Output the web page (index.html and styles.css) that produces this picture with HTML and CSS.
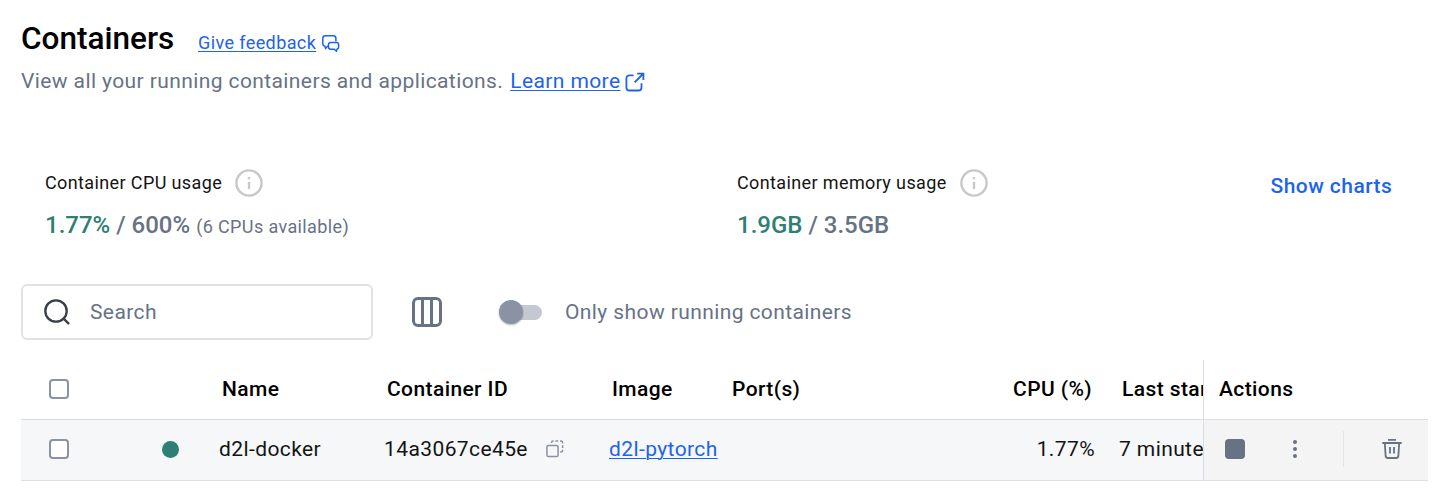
FILE: index.html
```html
<!DOCTYPE html>
<html lang="en">
<head>
<meta charset="utf-8">
<title>Containers</title>
<link rel="stylesheet" href="styles.css">
</head>
<body>
<main class="page">
  <header class="heading">
    <h1 class="title">Containers</h1>
    <a class="link feedback"><span class="link-text">Give feedback</span>
      <svg class="icon-feedback" width="18" height="18" viewBox="0 0 18 18" fill="none" stroke="currentColor" stroke-width="1.5" stroke-linejoin="round"><path d="M6.3 11.2H5.4L3.6 13.6L2.9 11.3C1.5 11 .8 10.2 .8 8.8V3.4C.8 1.7 1.8.8 3.4.8H11.3C13 .8 13.9 1.7 13.9 3.4V6.4"/><path d="M8.7 7.6H14.4C15.9 7.6 16.6 8.3 16.6 9.7V12C16.6 13.2 16.1 13.9 15.1 14.1L14.4 16.2L12.4 14.2H8.7C7.2 14.2 6.5 13.5 6.5 12V9.7C6.5 8.3 7.2 7.6 8.7 7.6Z"/></svg>
    </a>
  </header>
  <p class="subtitle"><span>View all your running containers and applications.</span>
    <a class="link learn"><span class="link-text">Learn more</span>
      <svg class="icon-external" width="20" height="20" viewBox="0 0 20 20" fill="none" stroke="currentColor" stroke-width="1.8"><path d="M8.5 3.3H4.6C2.6 3.3 1.4 4.4 1.4 6.4V15.4C1.4 17.4 2.6 18.5 4.6 18.5H13.4C15.4 18.5 16.5 17.4 16.5 15.4V11.3"/><path d="M9.6 10.4L18 2M12.2 1.7H18.4V8"/></svg>
    </a>
  </p>

  <section class="stats">
    <div class="stat stat-cpu">
      <div class="stat-label"><span>Container CPU usage</span>
        <svg class="icon-info" width="28" height="28" viewBox="0 0 28 28"><circle cx="14" cy="14" r="12.6" fill="none" stroke="#c8c8c8" stroke-width="2.4"/><path d="M14 13V20M14 8V10.2" stroke="#c8c8c8" stroke-width="2.4"/></svg>
      </div>
      <div class="stat-value"><span class="used">1.77%</span> / 600% <span class="note">(6 CPUs available)</span></div>
    </div>
    <div class="stat stat-memory">
      <div class="stat-label"><span>Container memory usage</span>
        <svg class="icon-info" width="28" height="28" viewBox="0 0 28 28"><circle cx="14" cy="14" r="12.6" fill="none" stroke="#c8c8c8" stroke-width="2.4"/><path d="M14 13V20M14 8V10.2" stroke="#c8c8c8" stroke-width="2.4"/></svg>
      </div>
      <div class="stat-value"><span class="used">1.9GB</span> / 3.5GB</div>
    </div>
    <a class="charts">Show charts</a>
  </section>

  <section class="toolbar">
    <div class="search">
      <svg width="28" height="28" viewBox="0 0 28 28" fill="none" stroke="#393f49" stroke-width="2.3" stroke-linecap="round"><circle cx="13" cy="13" r="10.7"/><path d="M20.6 20.6L25.4 25.4"/></svg>
      <span>Search</span>
    </div>
    <svg class="icon-columns" width="30" height="30" viewBox="0 0 30 30" fill="none" stroke="#677285" stroke-width="3"><rect x="1.5" y="1.5" width="27" height="27" rx="4.5"/><path d="M10.5 1.5V28.5M19.5 1.5V28.5"/></svg>
    <div class="toggle"><span class="knob"></span></div>
    <span class="toggle-label">Only show running containers</span>
  </section>

  <section class="table">
    <div class="row head">
      <div class="cell check"><span class="box"></span></div>
      <div class="cell"></div>
      <div class="cell">Name</div>
      <div class="cell">Container ID</div>
      <div class="cell">Image</div>
      <div class="cell">Port(s)</div>
      <div class="cell number">CPU (%)</div>
      <div class="cell last">Last started</div>
      <div class="cell actions">Actions</div>
    </div>
    <div class="row body">
      <div class="cell check"><span class="box"></span></div>
      <div class="cell"><span class="status"></span></div>
      <div class="cell">d2l-docker</div>
      <div class="cell id"><span>14a3067ce45e</span>
        <svg width="18" height="18" viewBox="0 0 18 18" fill="none" stroke="#8993a5" stroke-width="1.5"><rect x=".9" y="5.4" width="11.2" height="11.2" rx="1.6"/><path d="M5.6 3V2.4Q5.6 1 7 1H7.6M9.4 1H12.2M14 1H15Q16.6 1 16.6 2.6V3.4M16.6 5.2V8M16.6 9.8V10.5Q16.6 12 15 12H14.2"/></svg>
      </div>
      <div class="cell"><a class="link link-text">d2l-pytorch</a></div>
      <div class="cell"></div>
      <div class="cell number">1.77%</div>
      <div class="cell last">7 minutes ago</div>
      <div class="cell actions">
        <span class="stop"></span>
        <svg class="icon-more" width="4" height="18" viewBox="0 0 4 18" fill="#677285"><circle cx="2" cy="2" r="2"/><circle cx="2" cy="9" r="2"/><circle cx="2" cy="16" r="2"/></svg>
        <span class="separator"></span>
        <svg class="icon-trash" width="20" height="20" viewBox="0 0 20 20" fill="none" stroke="#677285" stroke-width="1.8"><path d="M6 .9H14M.3 4H19.7M2.8 4L3.6 16.6Q3.8 19 6 19H14Q16.2 19 16.4 16.6L17.2 4M8 8V14.5M12 8V14.5"/></svg>
      </div>
    </div>
  </section>
</main>
</body>
</html>
```
FILE: styles.css
```css
* { box-sizing: border-box; }
body {
  margin: 0;
  background: #fff;
  color: #141414;
  font-family: Roboto, sans-serif;
  font-size: 21px;
  line-height: 30px;
  letter-spacing: 0.4px;
}
svg { display: block; flex: none; }
.page { padding: 18px 19px 0 21px; }
.heading { display: flex; height: 40px; }
.title {
  margin: 0;
  color: #000;
  font-size: 31.5px;
  font-weight: 500;
  line-height: 41px;
  letter-spacing: 0;
  width: 177px;
}
.link { color: #1d63ed; }
.link-text { text-decoration: underline; text-decoration-thickness: 1px; text-underline-offset: 2px; }
.feedback { display: flex; font-size: 18px; line-height: 50px; gap: 6px; }
.icon-feedback { margin-top: 17px; }
.subtitle { display: flex; gap: 7px; margin: 8px 0 0; color: #677285; }
.learn { display: flex; gap: 5px; }
.icon-external { margin-top: 6px; }

.stats { display: flex; height: 72px; margin-top: 72px; padding-left: 24px; }
.stat-cpu { width: 692px; }
.stat-memory { width: 533.5px; }
.stat-label { display: flex; align-items: center; gap: 13px; height: 30px; font-size: 18px; letter-spacing: 0.38px; }
.stat-value { margin-top: 12px; color: #677285; font-size: 24px; font-weight: 500; letter-spacing: 0; }
.used { color: #2e7f74; }
.note { font-size: 18px; font-weight: 400; letter-spacing: 0.38px; }
.charts { color: #1d63ed; font-weight: 500; line-height: 36px; letter-spacing: 0.45px; white-space: nowrap; }

.toolbar { display: flex; align-items: center; height: 56px; margin-top: 44px; color: #677285; }
.search {
  display: flex;
  align-items: center;
  gap: 19px;
  width: 352px;
  height: 56px;
  padding-left: 20px;
  border: 2px solid #e1e2e6;
  border-radius: 6px;
}
.icon-columns { margin-left: 39px; }
.toggle {
  display: flex;
  align-items: center;
  width: 39px;
  height: 15px;
  margin-left: 61px;
  border-radius: 8px;
  background: #c4c8d1;
}
.knob {
  flex: none;
  width: 24px;
  height: 24px;
  margin-left: -4px;
  border-radius: 50%;
  background: #8993a5;
  box-shadow: 0 1px 2px rgba(0, 0, 0, 0.3);
}
.toggle-label { margin-left: 23px; }

.table { width: 1407px; margin-top: 20px; }
.row {
  display: grid;
  grid-template-columns: 126px 57px 165px 225px 120px 210px 180px 99px 225px;
  height: 60px;
  border-bottom: 1px solid #dcdde0;
}
.body { height: 61px; background: #f5f7f9; }
.cell { display: flex; align-items: center; padding: 0 15px 2px; white-space: nowrap; min-width: 0; }
.head .cell { padding: 0 18px 1px; color: #000; font-weight: 500; }
.row .check { padding-left: 28px; }
.box { width: 20px; height: 20px; border: 2px solid #8993a5; border-radius: 4px; background: #fff; }
.number { justify-content: flex-end; }
.head .number { padding-right: 12px; }
.body .number { padding-right: 9px; }
.row .last { overflow: hidden; padding-right: 0; }
.head .actions { padding-left: 15px; }
.row .actions { border-left: 1px solid #dcdde0; }
.body .actions { padding: 0 0 2px 21px; background: #f4f4f4; }
.status { width: 17px; height: 17px; margin-left: -0.5px; border-radius: 50%; background: #2e7f74; }
.id { gap: 18px; }
.stop { width: 20px; height: 20px; border-radius: 4px; background: #677285; }
.icon-more { margin-left: 48px; }
.separator { width: 1px; height: 36px; margin-left: 46px; background: #e4e5e7; }
.icon-trash { margin-left: 38px; }
```
